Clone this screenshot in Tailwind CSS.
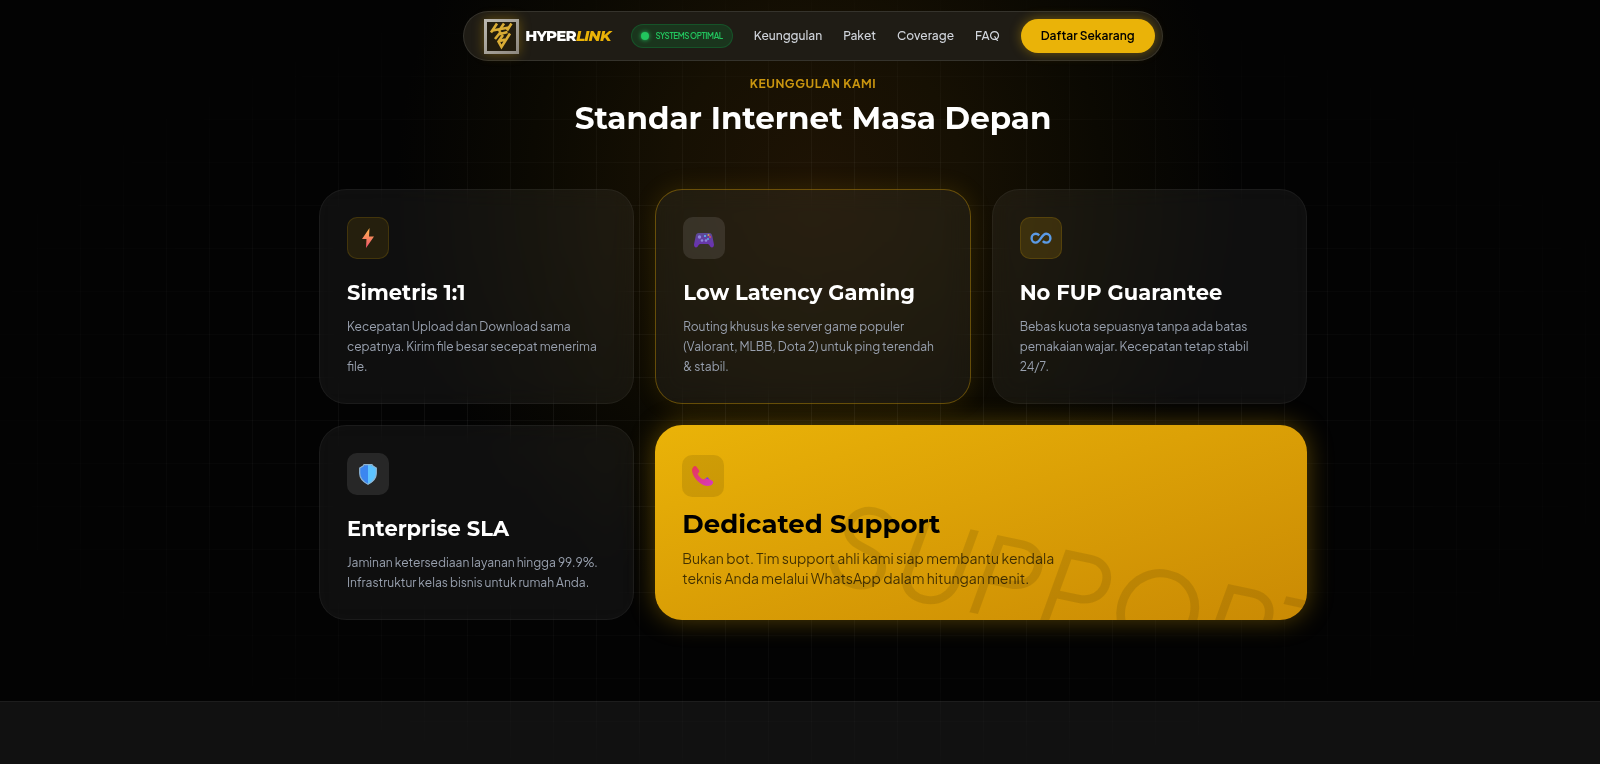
<!DOCTYPE html>
<html lang="id">
<head>
    <meta charset="UTF-8">
    <meta name="viewport" content="width=device-width, initial-scale=1.0">
    <title>Hyperlink</title>
    <script src="https://cdn.jsdelivr.net/npm/@tailwindcss/browser@4"></script>
</head>
<body class="min-h-screen bg-[#030303] font-['Plus_Jakarta_Sans','Open_Sans',sans-serif] text-white overflow-x-hidden">

    <!-- Background: glow + grid -->
    <div class="fixed inset-0 -z-10 bg-[radial-gradient(ellipse_420px_430px_at_51%_24%,#1e1304_0%,#161003_35%,#0b0902_68%,#030303_100%)]"></div>
    <div class="fixed inset-0 -z-10 bg-[linear-gradient(to_right,rgba(255,255,255,0.05)_1px,transparent_1px),linear-gradient(to_bottom,rgba(255,255,255,0.035)_1px,transparent_1px)] bg-[size:43px_43px] bg-[position:37px_33px] mask-[radial-gradient(ellipse_at_center,black_30%,transparent_80%)]"></div>

    <!-- Navbar -->
    <header class="fixed top-0 inset-x-0 z-50 flex justify-center pt-[11px] pl-[26px]">
        <nav class="flex items-center gap-[21px] h-[50px] pl-5 pr-[7px] rounded-full border border-white/10 bg-[#1f1c15]">
            <a href="#" class="flex items-center gap-[6px]">
                <svg class="size-[35px] shadow-[0_0_12px_rgba(234,179,8,0.35)]" viewBox="0 0 35 35">
                    <defs>
                        <linearGradient id="frame" x1="0" y1="0" x2="1" y2="1">
                            <stop offset="0" stop-color="#b9b6ae"/>
                            <stop offset="1" stop-color="#8f8a80"/>
                        </linearGradient>
                    </defs>
                    <rect x="1.5" y="1.5" width="32" height="32" fill="#231d0e" stroke="url(#frame)" stroke-width="3"/>
                    <g fill="none" stroke="#d9ac35" stroke-width="2.6">
                        <path d="M13 4.500L7 13.500M20 4.500L14.500 12.500M27.500 4.500L23 11.500"/>
                        <path d="M8.500 11.500L25 8.500"/>
                        <path d="M17 12.500L11 20M14.500 15.500L23.500 13"/>
                        <path d="M19 16L14.500 22.500L17.500 28L26 14.500M16 22L21 20.500"/>
                    </g>
                </svg>
                <span class="font-[Montserrat,Inter,sans-serif] text-[15px] leading-5 font-extrabold tracking-tighter">HYPER<span class="italic text-[#eab308]">LINK</span></span>
            </a>
            <div class="flex items-center gap-[6px] h-6 px-[9px] rounded-full border border-green-500/20 bg-green-500/15 text-[#22c55e]">
                <span class="size-2 rounded-full bg-[#22c55e] shadow-[0_0_4px_#22c55e]"></span>
                <span class="text-[8px] font-semibold tracking-tighter">SYSTEMS OPTIMAL</span>
            </div>
            <a href="#keunggulan" class="text-[12px] font-medium text-gray-300">Keunggulan</a>
            <a href="#paket" class="text-[12px] font-medium text-gray-300">Paket</a>
            <a href="#coverage" class="text-[12px] font-medium text-gray-300">Coverage</a>
            <a href="#faq" class="text-[12px] font-medium text-gray-300">FAQ</a>
            <button type="button" class="h-[34px] px-5 rounded-full bg-[#eab308] text-black text-[12px] font-semibold shadow-[0_0_12px_rgba(234,179,8,0.4)]">Daftar Sekarang</button>
        </nav>
    </header>

    <!-- Keunggulan -->
    <section id="keunggulan" class="pt-[75px] pb-[81px] pl-[26px]">
        <div class="max-w-[988px] mx-auto">
            <div class="text-center mb-[52px]">
                <p class="text-[12px] leading-[18px] font-bold tracking-wider text-[#c9950f]">KEUNGGULAN KAMI</p>
                <h2 class="mt-[6px] font-[Montserrat,Inter,sans-serif] text-[31px] leading-[38px] font-bold">Standar Internet Masa Depan</h2>
            </div>

            <div class="grid grid-cols-3 gap-[21px]">
                <div class="px-[27px] pt-[27px] pb-[26px] rounded-[27px] border border-white/5 bg-white/5 backdrop-blur-md">
                    <div class="size-[42px] rounded-[10px] border border-yellow-500/15 bg-yellow-500/10 flex items-center justify-center">
                        <svg class="size-5" viewBox="0 0 20 20">
                            <defs><linearGradient id="bolt" x1="0" y1="0" x2="0" y2="1"><stop offset="0" stop-color="#ffb84d"/><stop offset="1" stop-color="#f0506e"/></linearGradient></defs>
                            <path d="M11.500 0L4 11h4.500L8 20l8-11.500h-5z" fill="url(#bolt)"/>
                        </svg>
                    </div>
                    <h3 class="mt-5 mb-[10px] font-[Montserrat,Inter,sans-serif] text-[21px] leading-7 font-bold">Simetris 1:1</h3>
                    <p class="text-[12px] leading-5 text-gray-400">Kecepatan Upload dan Download sama cepatnya. Kirim file besar secepat menerima file.</p>
                </div>

                <div class="px-[27px] pt-[27px] pb-[26px] rounded-[27px] border border-yellow-500/35 bg-white/5 backdrop-blur-md shadow-[0_0_25px_rgba(234,179,8,0.12)]">
                    <div class="size-[42px] rounded-[10px] bg-white/10 flex items-center justify-center">
                        <svg class="size-5" viewBox="0 0 20 20">
                            <defs><linearGradient id="pad" x1="0" y1="0" x2="0" y2="1"><stop offset="0" stop-color="#5b4a94"/><stop offset="1" stop-color="#6d2fb5"/></linearGradient></defs>
                            <path d="M4.500 5h11c1.500 0 2.300 1 2.700 2.500l1.700 8.500c.3 1.800-.6 3.500-2 3.500-1.600 0-2.600-3.500-4-3.500H6.100c-1.400 0-2.400 3.500-4 3.500-1.400 0-2.300-1.700-2-3.500l1.700-8.500C2.200 6 3 5 4.500 5z" fill="url(#pad)"/>
                            <g fill="#8f86dc">
                                <circle cx="5.500" cy="9" r="1.700"/><circle cx="8" cy="12.500" r="1.300"/><circle cx="12" cy="12.500" r="1.300"/>
                            </g>
                            <circle cx="11" cy="8" r="1" fill="#5cc3ff"/><circle cx="14.500" cy="7" r="1" fill="#c9a84a"/><circle cx="16" cy="9" r="1" fill="#e0466a"/><circle cx="14" cy="11" r="1" fill="#4fb6e8"/>
                        </svg>
                    </div>
                    <h3 class="mt-5 mb-[10px] font-[Montserrat,Inter,sans-serif] text-[21px] leading-7 font-bold">Low Latency Gaming</h3>
                    <p class="text-[12px] leading-5 text-gray-400">Routing khusus ke server game populer (Valorant, MLBB, Dota 2) untuk ping terendah &amp; stabil.</p>
                </div>

                <div class="px-[27px] pt-[27px] pb-[26px] rounded-[27px] border border-white/5 bg-white/5 backdrop-blur-md">
                    <div class="size-[42px] rounded-[10px] border border-yellow-500/15 bg-yellow-500/15 flex items-center justify-center">
                        <svg class="w-[22px] h-5" viewBox="0 0 22 20" fill="none" stroke="#5b9be6" stroke-width="2.4">
                            <path d="M9.200 7.300C8.200 6.300 7.200 5.800 5.800 5.800a4.200 4.400 0 0 0 0 8.800C10.500 14.600 11.500 5.800 16.200 5.800a4.200 4.400 0 0 1 0 8.800c-1.400 0-2.400-.5-3.400-1.500"/>
                        </svg>
                    </div>
                    <h3 class="mt-5 mb-[10px] font-[Montserrat,Inter,sans-serif] text-[21px] leading-7 font-bold">No FUP Guarantee</h3>
                    <p class="text-[12px] leading-5 text-gray-400">Bebas kuota sepuasnya tanpa ada batas pemakaian wajar. Kecepatan tetap stabil 24/7.</p>
                </div>

                <div class="px-[27px] pt-[27px] pb-[26px] rounded-[27px] border border-white/5 bg-white/5 backdrop-blur-md">
                    <div class="size-[42px] rounded-[10px] bg-white/10 flex items-center justify-center">
                        <svg class="size-[22px]" viewBox="0 0 22 22">
                            <path d="M11 1L6.500 2.500 2.500 5v5c0 5.500 4 9.500 8.500 11.500z" fill="#3b86f0"/>
                            <path d="M11 1l4.500 1.500 4 2.500v5c0 5.500-4 9.500-8.500 11.500z" fill="#5cc3ff"/>
                            <path d="M7 1.700h8l1 1.300 3.300 2v5c0 5-3.800 9-8.300 11.200C6.500 19 2.700 15 2.700 10V5L6 3z" fill="none" stroke="#8fb3cf" stroke-width="1.200"/>
                        </svg>
                    </div>
                    <h3 class="mt-5 mb-[10px] font-[Montserrat,Inter,sans-serif] text-[21px] leading-7 font-bold">Enterprise SLA</h3>
                    <p class="text-[12px] leading-5 text-gray-400">Jaminan ketersediaan layanan hingga 99.9%. Infrastruktur kelas bisnis untuk rumah Anda.</p>
                </div>

                <div class="relative overflow-hidden col-span-2 px-[27px] pt-[30px] rounded-[27px] bg-linear-to-br from-[#eab308] to-[#ca8a04] text-black shadow-[0_0_26px_rgba(234,179,8,0.35)]">
                    <span class="absolute -right-6 -bottom-6 rotate-12 text-[109px] leading-none font-normal italic text-black/10">SUPPORT</span>
                    <div class="relative size-[42px] rounded-[10px] bg-black/10 flex items-center justify-center">
                        <svg class="size-[22px]" viewBox="0 0 22 22">
                            <defs><linearGradient id="phone" x1="0" y1="0" x2="1" y2="1"><stop offset="0" stop-color="#e8384f"/><stop offset="1" stop-color="#d63bc4"/></linearGradient></defs>
                            <path d="M1 2.500C2 .8 3.500.5 4.500 1.800L7 5.200c.8 1.200.2 2.200-.9 3-.5.500-.3 1.200.1 1.900 1.200 2 2.700 3.300 4.700 4.200.8.300 1.300.2 1.900-.5 1-1.200 2-1.300 3.200-.6l4.200 2.600c1.500 1 1.200 2.500-.2 3.700-2.500 2.200-7 1.800-11-.8C3.500 15 .2 9.500 0 5.200 0 4 .4 3.300 1 2.500z" fill="url(#phone)"/>
                            <path d="M13.500 13.500l2-1.500 2 2.500z" fill="#7b4bd0"/>
                        </svg>
                    </div>
                    <h3 class="relative mt-[11px] mb-2 font-[Montserrat,Inter,sans-serif] text-[26px] leading-8 font-bold">Dedicated Support</h3>
                    <p class="relative max-w-[380px] text-[14px] leading-5 text-black/70">Bukan bot. Tim support ahli kami siap membantu kendala teknis Anda melalui WhatsApp dalam hitungan menit.</p>
                </div>
            </div>
        </div>
    </section>

    <!-- Paket -->
    <section id="paket" class="min-h-[63px] border-t border-white/5 bg-white/6"></section>
</body>
</html>
